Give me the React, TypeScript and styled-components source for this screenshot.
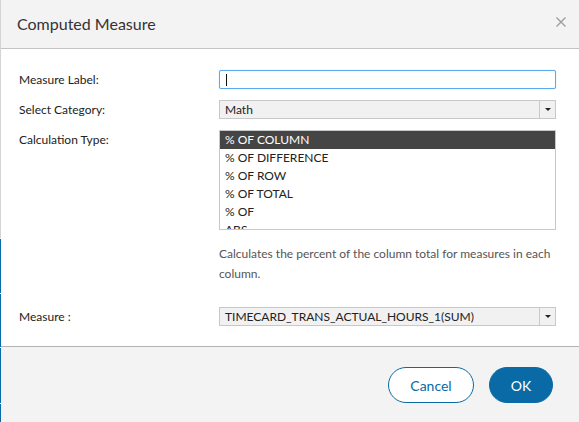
import styled, { createGlobalStyle } from 'styled-components';

const GlobalStyle = createGlobalStyle`
  html, body {
    margin: 0;
    padding: 0;
    background: #ffffff;
    font-family: Lato, "Open Sans", Arial, sans-serif;
    color: #333;
  }
  * { box-sizing: border-box; }
`;

const Page = styled.div`
  display: flex;
  width: 579px;
  height: 422px;
  overflow: hidden;
`;

const Backdrop = styled.div`
  display: flex;
  flex-direction: column;
  width: 1px;
  flex: none;
  gap: 1px;
  background: #ffffff;
`;

const BackdropPiece = styled.div<{ $h: number; $blue?: boolean }>`
  height: ${(p) => p.$h}px;
  flex: none;
  background: ${(p) => (p.$blue ? '#0a6aa6' : '#d4d4d4')};
`;

const Dialog = styled.div`
  flex: 1;
  display: flex;
  flex-direction: column;
  background: #fff;
`;

const Header = styled.div`
  height: 49px;
  display: flex;
  align-items: center;
  justify-content: space-between;
  padding: 0 12px 0 16px;
  background: #f3f3f3;
  border-bottom: 1px solid #c4c4c4;
`;

const Title = styled.h1`
  margin: 0;
  font-size: 16px;
  font-weight: 400;
  color: #333;
  padding-bottom: 2px;
`;

const Close = styled.button`
  border: 0;
  background: none;
  padding: 0;
  width: 12px;
  height: 12px;
  display: flex;
  margin-bottom: 4px;
  cursor: pointer;
`;

const Body = styled.div`
  display: grid;
  grid-template-columns: 200px 337px;
  row-gap: 11px;
  padding: 21px 22px 20px 18px;
  border-bottom: 1px solid #b4b4b4;
`;

const Label = styled.div`
  font-size: 12px;
  line-height: 19px;
  color: #222;
`;

const TextBox = styled.div`
  height: 19px;
  border: 1px solid #5aa9f2;
  border-radius: 2px;
  background: #fff;
  box-shadow: 0 0 1px #8cc4f6;
  display: flex;
  align-items: center;
  padding-left: 6px;
`;

const Caret = styled.span`
  width: 1px;
  height: 12px;
  background: #111;
`;

const Select = styled.div`
  height: 19px;
  border: 1px solid #c8c8c8;
  background: #f1f1f1;
  display: flex;
  align-items: stretch;
`;

const SelectValue = styled.div`
  flex: 1;
  font-size: 12px;
  line-height: 17px;
  padding-left: 5px;
  color: #222;
`;

const SelectArrow = styled.div`
  width: 16px;
  border-left: 1px solid #c8c8c8;
  display: flex;
  align-items: center;
  justify-content: center;
  &::after {
    content: '';
    border-left: 3px solid transparent;
    border-right: 3px solid transparent;
    border-top: 3px solid #222;
  }
`;

const ListBox = styled.div`
  height: 100px;
  border: 1px solid #c8c8c8;
  overflow: hidden;
  display: flex;
  flex-direction: column;
`;

const Option = styled.div<{ $selected?: boolean }>`
  flex: none;
  height: 18px;
  line-height: 18px;
  font-size: 12px;
  padding-left: 5px;
  background: ${(p) => (p.$selected ? '#454545' : 'transparent')};
  color: ${(p) => (p.$selected ? '#fff' : '#222')};
`;

const Help = styled.p`
  grid-column: 2;
  margin: 3px 0 12px;
  font-size: 12px;
  line-height: 20px;
  color: #555;
`;

const Footer = styled.div`
  flex: 1;
  background: #f3f3f3;
  display: flex;
  justify-content: flex-end;
  align-items: flex-start;
  gap: 15px;
  padding: 20px 26px 0 0;
`;

const Button = styled.button<{ $primary?: boolean }>`
  height: 36px;
  border-radius: 18px;
  font-family: inherit;
  font-size: 14px;
  padding: 0;
  width: ${(p) => (p.$primary ? '64px' : '86px')};
  border: 1px solid #0a6aa6;
  background: ${(p) => (p.$primary ? '#0a6aa6' : '#fff')};
  color: ${(p) => (p.$primary ? '#fff' : '#0a6aa6')};
  cursor: pointer;
`;

const options = ['% OF COLUMN', '% OF DIFFERENCE', '% OF ROW', '% OF TOTAL', '% OF', 'ABS', 'ACCUMULATE'];

export default function App() {
  return (
    <Page>
      <GlobalStyle />
      <Backdrop>
        <BackdropPiece $h={238} />
        <BackdropPiece $h={54} $blue />
        <BackdropPiece $h={53} $blue />
        <BackdropPiece $h={55} $blue />
        <BackdropPiece $h={20} $blue />
      </Backdrop>
      <Dialog>
        <Header>
          <Title>Computed Measure</Title>
          <Close aria-label="Close">
            <svg width="12" height="12" viewBox="0 0 12 12">
              <path d="M1.5 1.5 L10.5 10.5 M10.5 1.5 L1.5 10.5" stroke="#9a9a9a" strokeWidth="1.3" fill="none" />
            </svg>
          </Close>
        </Header>
        <Body>
          <Label>Measure Label:</Label>
          <TextBox>
            <Caret />
          </TextBox>

          <Label>Select Category:</Label>
          <Select>
            <SelectValue>Math</SelectValue>
            <SelectArrow />
          </Select>

          <Label>Calculation Type:</Label>
          <ListBox>
            {options.map((o, i) => (
              <Option key={o} $selected={i === 0}>
                {o}
              </Option>
            ))}
          </ListBox>

          <Help>Calculates the percent of the column total for measures in each column.</Help>

          <Label>Measure :</Label>
          <Select>
            <SelectValue>TIMECARD_TRANS_ACTUAL_HOURS_1(SUM)</SelectValue>
            <SelectArrow />
          </Select>
        </Body>
        <Footer>
          <Button>Cancel</Button>
          <Button $primary>OK</Button>
        </Footer>
      </Dialog>
    </Page>
  );
}
